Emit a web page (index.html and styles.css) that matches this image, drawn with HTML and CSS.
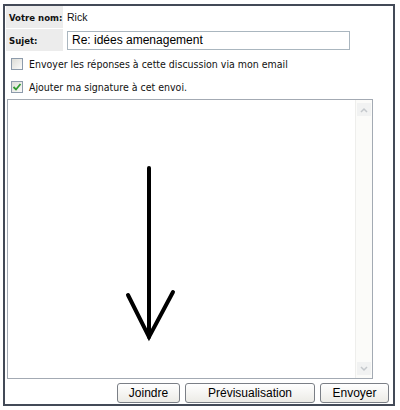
FILE: index.html
```html
<!DOCTYPE html>
<html lang="fr">
<head>
    <meta charset="UTF-8">
    <meta name="viewport" content="width=device-width, initial-scale=1.0">
    <title>Répondre</title>
    <link rel="stylesheet" href="styles.css">
</head>
<body>
    <div class="frame">
        <div class="field-row">
            <div class="label">Votre nom:</div>
            <div class="value">Rick</div>
        </div>
        <div class="field-row">
            <div class="label">Sujet:</div>
            <div class="value">
                <div class="text-input">Re: idées amenagement</div>
            </div>
        </div>

        <div class="option">
            <span class="checkbox"></span>
            <span>Envoyer les réponses à cette discussion via mon email</span>
        </div>
        <div class="option">
            <span class="checkbox checked">
                <svg width="10" height="10" viewBox="0 0 10 10">
                    <path d="M1.5,5 L4,7.5 L8.5,2" fill="none" stroke="#2f9a2f" stroke-width="1.8"/>
                </svg>
            </span>
            <span>Ajouter ma signature à cet envoi.</span>
        </div>

        <div class="message">
            <div class="message-body">
                <!-- flèche dessinée dans la zone de texte -->
                <svg class="arrow" width="350" height="278" viewBox="0 0 350 278">
                    <path d="M141,68 L141,237" fill="none" stroke="#000" stroke-width="4" stroke-linecap="round"/>
                    <path d="M120,195 L141,237 L165,192" fill="none" stroke="#000" stroke-width="4" stroke-linecap="round" stroke-linejoin="miter"/>
                </svg>
            </div>
            <div class="scrollbar">
                <div class="scroll-btn">
                    <svg width="8" height="6" viewBox="0 0 8 6"><path d="M1,5 L4,2 L7,5" fill="none" stroke="#c4c8cc" stroke-width="1.5"/></svg>
                </div>
                <div class="scroll-btn">
                    <svg width="8" height="6" viewBox="0 0 8 6"><path d="M1,1 L4,4 L7,1" fill="none" stroke="#c4c8cc" stroke-width="1.5"/></svg>
                </div>
            </div>
        </div>

        <div class="actions">
            <button class="btn btn-join">Joindre</button>
            <button class="btn btn-preview">Prévisualisation</button>
            <button class="btn btn-send">Envoyer</button>
        </div>
    </div>
</body>
</html>
```

FILE: styles.css
```css
body {
    margin: 0;
    background: #fff;
    font-family: "DejaVu Sans Condensed", "DejaVu Sans", sans-serif;
    color: #111;
}

.frame {
    box-sizing: border-box;
    width: 392px;
    height: 402px;
    margin: 4px 0 0 3px;
    border: 2px solid #434a57;
    padding: 0 0 0 1px;
    display: flex;
    flex-direction: column;
}

.field-row {
    display: flex;
    height: 22px;
    margin-bottom: 1px;
}

.label {
    width: 57px;
    background: #ececec;
    font-weight: bold;
    font-size: 9.5px;
    display: flex;
    align-items: center;
    padding-left: 3px;
    box-sizing: border-box;
}

.value {
    display: flex;
    align-items: center;
    padding-left: 4px;
    font-family: "Liberation Sans", Arial, sans-serif;
    font-size: 10.5px;
}

.text-input {
    box-sizing: border-box;
    width: 283px;
    height: 19px;
    border: 1px solid #aab6bf;
    padding: 0 4px;
    font-size: 12px;
    line-height: 17px;
    color: #000;
}

.option {
    display: flex;
    align-items: center;
    gap: 6px;
    height: 23px;
    padding-left: 5px;
    font-size: 10.5px;
}

.option:first-of-type {
    margin-top: 2px;
}

.checkbox {
    box-sizing: border-box;
    width: 12px;
    height: 12px;
    border: 1px solid #8d9bab;
    background: linear-gradient(135deg, #dcdcd6, #fbfbfa);
    display: flex;
    align-items: center;
    justify-content: center;
}

.message {
    box-sizing: border-box;
    display: flex;
    width: 366px;
    height: 280px;
    margin: 1px 0 0 1px;
    border: 1px solid #a3aab3;
    background: #fff;
}

.message-body {
    flex: 1;
    overflow: hidden;
}

.arrow {
    display: block;
}

.scrollbar {
    width: 14px;
    background: #fbfbf9;
    border-left: 1px solid #eeeeec;
    display: flex;
    flex-direction: column;
    justify-content: space-between;
    padding: 3px 1px;
}

.scroll-btn {
    height: 13px;
    background: #f1f2f2;
    display: flex;
    align-items: center;
    justify-content: center;
}

.actions {
    display: flex;
    justify-content: flex-end;
    gap: 5px;
    margin-top: 4px;
    padding-right: 4px;
}

.btn {
    box-sizing: border-box;
    height: 20px;
    border: 1px solid #7b7f86;
    border-radius: 3px;
    background: linear-gradient(#ffffff, #ecebe6);
    font-family: "Liberation Sans", Arial, sans-serif;
    font-size: 12px;
    color: #000;
    padding: 0;
}

.btn-join { width: 63px; }
.btn-preview { width: 130px; }
.btn-send { width: 69px; }
```
